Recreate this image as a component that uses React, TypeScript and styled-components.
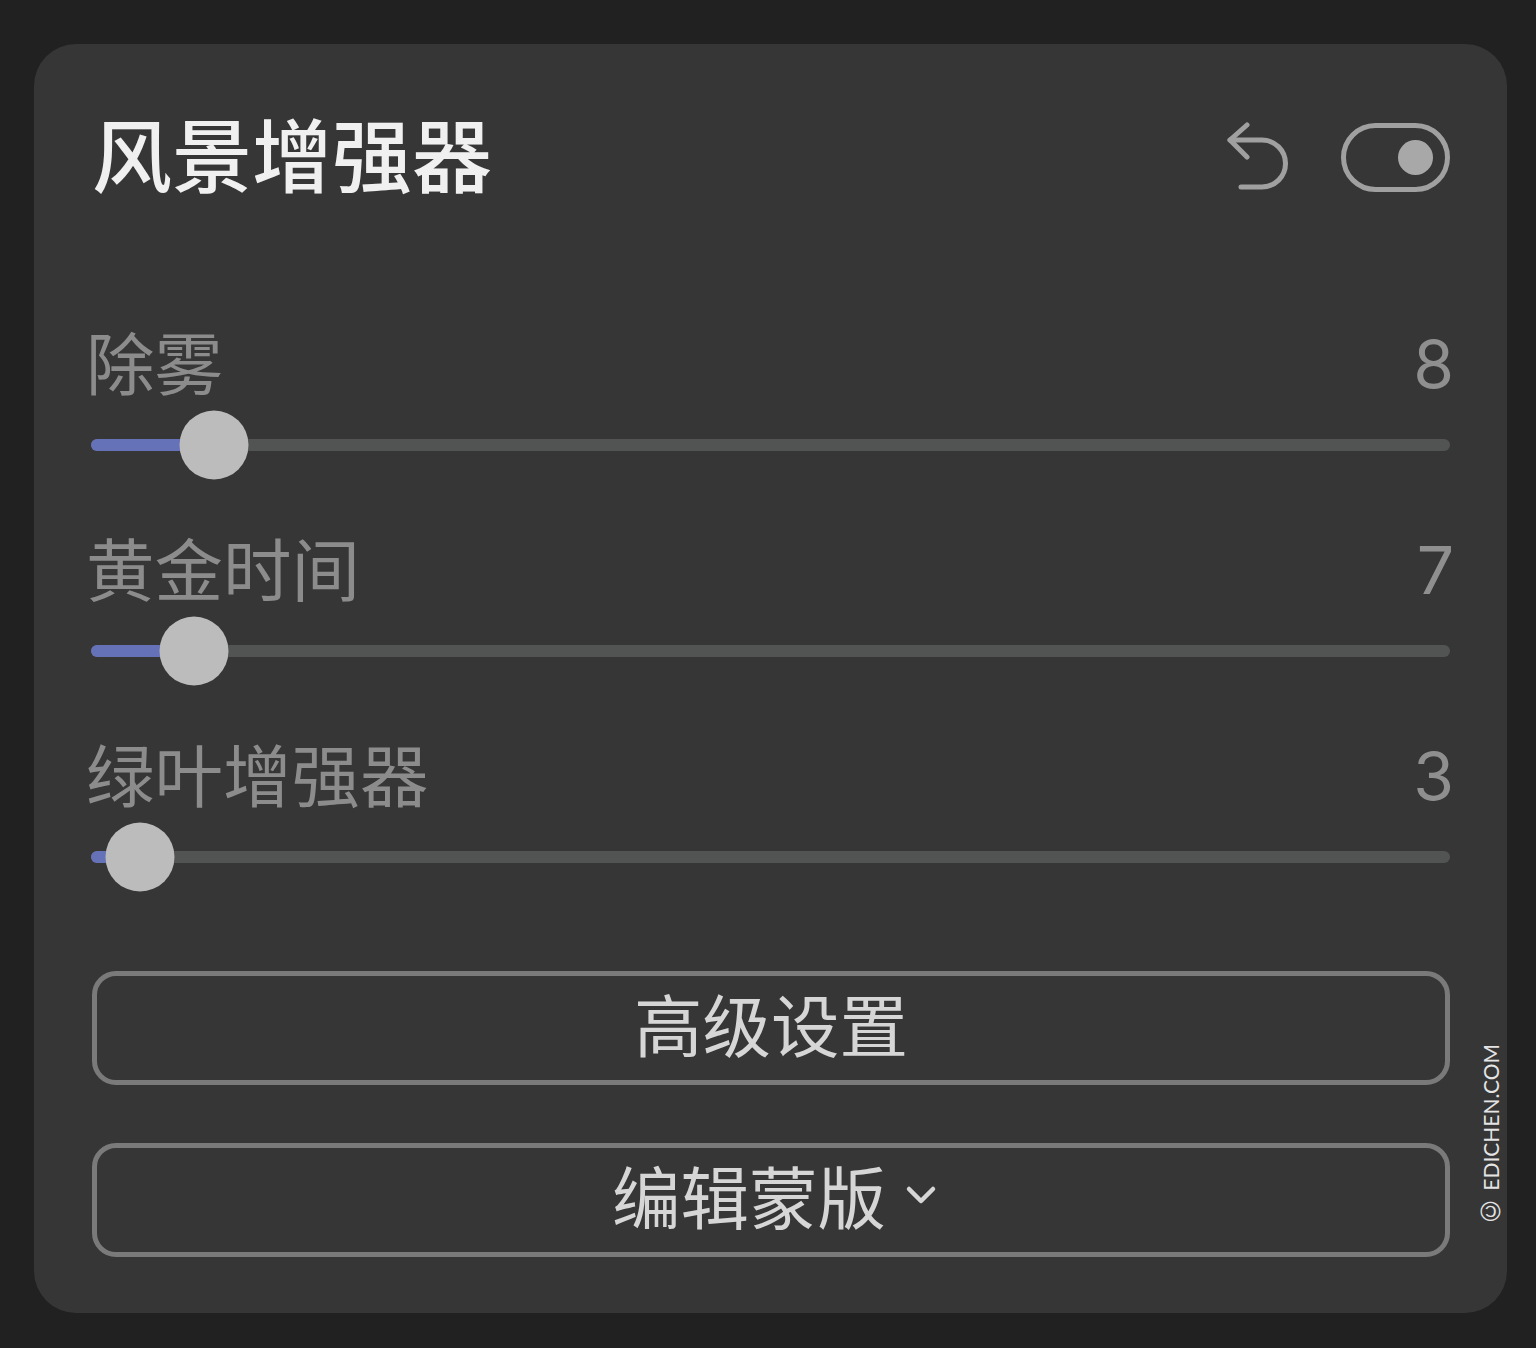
import styled, { createGlobalStyle } from 'styled-components';

const GlobalStyle = createGlobalStyle`
  html, body {
    margin: 0;
    padding: 0;
    background: #212121;
  }
`;

const FONT = `"Noto Sans CJK SC", "Noto Sans", sans-serif`;

const Page = styled.div`
  width: 1536px;
  height: 1348px;
  padding: 44px 29px 35px 34px;
  box-sizing: border-box;
  background: #212121;
  font-family: ${FONT};
`;

const Card = styled.div`
  position: relative;
  height: 100%;
  box-sizing: border-box;
  padding: 64px 57px 57px 57px;
  background: #363636;
  border-radius: 42px;
  display: flex;
  flex-direction: column;
`;

const Header = styled.div`
  display: flex;
  align-items: center;
  justify-content: space-between;
  height: 98px;
`;

const Title = styled.h1`
  margin: 0 0 12px 1px;
  font-size: 80px;
  line-height: 98px;
  font-weight: 500;
  color: #f0f0f0;
`;

const HeaderActions = styled.div`
  display: flex;
  align-items: center;
  gap: 52px;
`;

const UndoIcon = styled.svg`
  width: 64px;
  height: 70px;
  display: block;
`;

const Toggle = styled.div`
  width: 109px;
  height: 69px;
  box-sizing: border-box;
  border: 5px solid #a0a0a0;
  border-radius: 35px;
  display: flex;
  align-items: center;
  justify-content: flex-end;
  padding-right: 12px;
`;

const ToggleDot = styled.div`
  width: 35px;
  height: 35px;
  border-radius: 50%;
  background: #a8a8a8;
`;

const Sliders = styled.div`
  margin-top: 115px;
  display: flex;
  flex-direction: column;
  gap: 48px;
`;

const SliderRow = styled.div`
  display: flex;
  flex-direction: column;
  gap: 9px;
`;

const SliderHead = styled.div`
  display: flex;
  align-items: center;
  justify-content: space-between;
  height: 80px;
`;

const SliderLabel = styled.span`
  margin-left: -5px;
  font-size: 68.5px;
  line-height: 80px;
  font-weight: 400;
  color: #8c8c8c;
`;

const SliderValue = styled.span`
  margin: 6px -4px 0 0;
  font-family: "Inter", "Liberation Sans", sans-serif;
  font-size: 66px;
  line-height: 80px;
  font-weight: 400;
  color: #8f8f8f;
`;

const SliderArea = styled.div`
  height: 69px;
  display: flex;
  align-items: center;
`;

const Track = styled.div`
  position: relative;
  width: 100%;
  height: 12px;
  border-radius: 6px;
  background: #525454;
`;

const Fill = styled.div`
  height: 100%;
  border-radius: 6px 0 0 6px;
  background: #6672b8;
`;

const Thumb = styled.div`
  position: absolute;
  top: 50%;
  width: 69px;
  height: 69px;
  border-radius: 50%;
  background: #bcbcbc;
  transform: translate(-50%, -50%);
`;

const Buttons = styled.div`
  margin: 80px 0 0 1px;
  display: flex;
  flex-direction: column;
  gap: 58px;
`;

const OutlineButton = styled.button`
  height: 114px;
  padding: 0 0 10px;
  box-sizing: border-box;
  border: 5px solid #7a7a7a;
  border-radius: 24px;
  background: transparent;
  color: #d6d6d6;
  font-family: ${FONT};
  font-size: 68.5px;
  line-height: 80px;
  font-weight: 400;
  display: flex;
  align-items: center;
  justify-content: center;
  gap: 19px;
`;

const Chevron = styled.svg`
  width: 32px;
  height: 22px;
  margin-right: -7px;
  display: block;
`;

const Watermark = styled.div`
  position: absolute;
  right: 4px;
  bottom: 86px;
  writing-mode: vertical-rl;
  transform: rotate(180deg);
  font-family: "Lato", "Liberation Sans", sans-serif;
  font-size: 21px;
  line-height: 24px;
  color: #e4e4e4;
  white-space: nowrap;
`;

const CopyrightMark = styled.span`
  font-family: "Liberation Sans", sans-serif;
  font-size: 28px;
`;

const sliders = [
  { label: '除雾', value: 8, thumb: 123 },
  { label: '黄金时间', value: 7, thumb: 103 },
  { label: '绿叶增强器', value: 3, thumb: 49 },
];

export default function App() {
  return (
    <>
      <GlobalStyle />
      <Page>
        <Card>
          <Header>
            <Title>风景增强器</Title>
            <HeaderActions>
              <UndoIcon viewBox="0 0 64 70" fill="none" stroke="#a0a0a0" strokeWidth="5" strokeLinecap="round" strokeLinejoin="round">
                <path d="M22 3 L5 18 L22 35" />
                <path d="M5 18 H37 A23.5 23.5 0 0 1 37 65 H16" />
              </UndoIcon>
              <Toggle>
                <ToggleDot />
              </Toggle>
            </HeaderActions>
          </Header>

          <Sliders>
            {sliders.map((s) => (
              <SliderRow key={s.label}>
                <SliderHead>
                  <SliderLabel>{s.label}</SliderLabel>
                  <SliderValue>{s.value}</SliderValue>
                </SliderHead>
                <SliderArea>
                  <Track>
                    <Fill style={{ width: s.thumb }} />
                    <Thumb style={{ left: s.thumb }} />
                  </Track>
                </SliderArea>
              </SliderRow>
            ))}
          </Sliders>

          <Buttons>
            <OutlineButton>高级设置</OutlineButton>
            <OutlineButton>
              编辑蒙版
              <Chevron viewBox="0 0 32 22" fill="none" stroke="#d6d6d6" strokeWidth="4.5" strokeLinecap="round" strokeLinejoin="round">
                <path d="M4 5 L16 17 L28 5" />
              </Chevron>
            </OutlineButton>
          </Buttons>

          <Watermark><CopyrightMark>©</CopyrightMark> EDICHEN.COM</Watermark>
        </Card>
      </Page>
    </>
  );
}
